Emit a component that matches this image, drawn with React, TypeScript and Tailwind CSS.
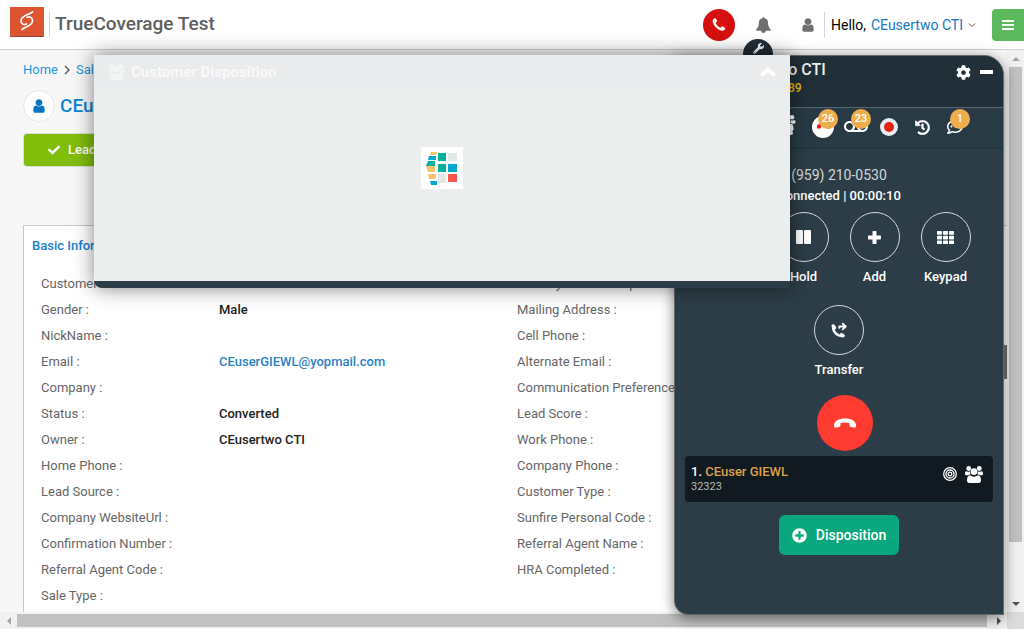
import React from 'react';
import { FaCheck, FaCog, FaHistory, FaPlusCircle, FaRegCommentDots, FaWrench } from 'react-icons/fa';
import { MdVoicemail } from 'react-icons/md';

const USER_PATH =
  'M1536 1399q0 109-62.500 187t-150.500 78h-854q-88 0-150.500-78t-62.500-187q0-85 8.500-160.500t31.500-152 58.500-131 94-89 134.500-34.500q131 128 313 128t313-128q76 0 134.500 34.500t94 89 58.500 131 31.500 152 8.500 160.500zm-256-887q0 159-112.500 271.500t-271.500 112.500-271.500-112.500-112.500-271.500 112.500-271.500 271.500-112.500 271.500 112.500 112.500 271.500z';
const PHONE_PATH =
  'M1600 1240q0 27-10 70.500t-21 68.500q-21 50-122 106-94 51-186 51-27 0-53-3.500t-57.500-12.500-47-14.500-55.500-20.500-49-18q-98-35-175-83-127-79-264-216t-216-264q-48-77-83-175-3-9-18-49t-20.500-55.500-14.500-47-12.500-57.500-3.500-53q0-92 51-186 56-101 106-122 25-11 68.500-21t70.500-10q14 0 21 3 18 6 53 76 11 19 30 54t35 63.500 31 53.500q3 4 17.500 25t21.500 35.500 7 28.500q0 20-28.500 50t-62 55-62 53-28.500 46q0 9 5 22.500t8.500 20.500 14 24 11.500 19q76 137 174 235t235 174q2 1 19 11.500t24 14 20.500 8.500 22.500 5q18 0 46-28.500t53-62 55-62 50-28.500q14 0 28.500 7t35.500 21.500 25 17.500q25 15 53.500 31t63.500 35 54 30q70 35 76 53 3 7 3 21z';
const BELL_PATH =
  'M1664 1408q0 52-38 90t-90 38h-448q0 106-75 181t-181 75-181-75-75-181h-448q-52 0-90-38t-38-90q50-42 91-88t85-119.500 74.500-158.500 50-206 19.500-260q0-152 117-282.500t307-158.500q-8-19-8-39 0-40 28-68t68-28 68 28 28 68q0 20-8 39 190 28 307 158.500t117 282.500q0 139 19.500 260t50 206 74.500 158.500 85 119.500 91 88z';

function Glyph({ d, className }: { d: string; className: string }) {
  return (
    <svg viewBox="0 0 1792 1792" className={className} fill="currentColor" aria-hidden="true">
      <path d={d} />
    </svg>
  );
}

function UsersIcon({ className }: { className: string }) {
  return (
    <svg viewBox="0 0 18 17" className={className} fill="currentColor" aria-hidden="true">
      <circle cx="3.700" cy="2.500" r="2.400" />
      <circle cx="14.300" cy="2.500" r="2.400" />
      <circle cx="9" cy="5.600" r="3.400" />
      <path d="M4.300 17C2.800 17 2 16 2 14.500c0-3 1-5.200 3-5.200 2.500 1.800 5.500 1.800 8 0 2 0 3 2.200 3 5.200 0 1.500-.8 2.500-2.300 2.500z" />
      <path d="M5 5.600Q3 6 1.400 5.200C.3 5.200 0 6.600 0 8q0 1.200 1.200 1.200h2Q4 8.500 5.600 8.200 5 7 5 5.600zM13 5.600q2 .4 3.600-.4C17.700 5.200 18 6.600 18 8q0 1.200-1.200 1.200h-2q-.8-.7-2.400-1Q13 7 13 5.600z" />
    </svg>
  );
}

function BrandLogo() {
  return (
    <svg viewBox="0 0 34 30" className="h-[30px] w-[34px]" aria-hidden="true">
      <rect width="34" height="30" fill="#dc5430" />
      <rect y="29" width="34" height="1" fill="#96453a" />
      <g fill="none" stroke="#fff" strokeLinecap="round" strokeWidth="1.700">
        <path d="M22.500 5C20.500 7.500 11.500 8 11 13.500c-.2 3.500 3 5 5.500 3.500" />
        <path d="M12 22.500c2-2.500 10-3 10.500-8.500.2-3.500-2.800-5-5.300-3.700" />
      </g>
    </svg>
  );
}

function Header() {
  return (
    <header className="flex h-[50px] shrink-0 items-center border-b border-[#d0d0d0] bg-white">
      <a href="#home" aria-label="TrueCoverage" className="-mt-1.5 ml-2.5">
        <BrandLogo />
      </a>
      <div className="ml-[5px] h-[26px] w-px bg-[#d5d5d5]" />
      <h1 className="ml-[5px] text-[19px] font-medium text-[#606060]">TrueCoverage Test</h1>
      <div className="ml-auto flex items-center">
        <button aria-label="Calls" className="flex size-8 items-center justify-center rounded-full bg-[#d60f0f] text-white">
          <Glyph d={PHONE_PATH} className="size-4" />
        </button>
        <button aria-label="Notifications" className="ml-[21px] text-[#6f6f6f]">
          <Glyph d={BELL_PATH} className="size-4" />
        </button>
        <button aria-label="Profile" className="ml-7 text-[#6f6f6f]">
          <Glyph d={USER_PATH} className="size-4" />
        </button>
        <div className="ml-2 h-[26px] w-px bg-[#cfd5dc]" />
        <span className="ml-1.5 flex gap-[5px] text-sm text-black">
          Hello, <a href="#account" className="text-[#1577bf]">CEusertwo CTI</a>
        </span>
        <svg viewBox="0 0 8 6" className="ml-[5px] h-1.5 w-2" fill="none" stroke="#7a4a44" aria-hidden="true">
          <path d="M1 1.500 4 4.500 7 1.500" />
        </svg>
        <button aria-label="Menu" className="ml-4 flex size-8 items-center justify-center rounded-l-sm bg-[#5cb85c]">
          <svg viewBox="0 0 12 10" className="h-2.5 w-3" fill="#fff" aria-hidden="true">
            <path d="M0 0h12v2H0zM0 4h12v2H0zM0 8h12v2H0z" />
          </svg>
        </button>
      </div>
    </header>
  );
}

const rows: [string, string, string][] = [
  ['Customer Id :', '', 'Primary Relationship :'],
  ['Gender :', 'Male', 'Mailing Address :'],
  ['NickName :', '', 'Cell Phone :'],
  ['Email :', 'CEuserGIEWL@yopmail.com', 'Alternate Email :'],
  ['Company :', '', 'Communication Preference :'],
  ['Status :', 'Converted', 'Lead Score :'],
  ['Owner :', 'CEusertwo CTI', 'Work Phone :'],
  ['Home Phone :', '', 'Company Phone :'],
  ['Lead Source :', '', 'Customer Type :'],
  ['Company WebsiteUrl :', '', 'Sunfire Personal Code :'],
  ['Confirmation Number :', '', 'Referral Agent Name :'],
  ['Referral Agent Code :', '', 'HRA Completed :'],
  ['Sale Type :', '', ''],
];

function LeadPage() {
  return (
    <main className="min-w-0 flex-1 overflow-hidden bg-[#f7f7f7] pl-[23px]">
      <nav className="flex h-10 items-center gap-1.5 text-[13px] text-[#1f97dd]">
        <a href="#home">Home</a>
        <svg viewBox="0 0 6 10" className="h-2.5 w-1.5" fill="none" stroke="#555" strokeWidth="1.4" aria-hidden="true">
          <path d="m1 1 4 4-4 4" />
        </svg>
        <a href="#sales">Sales</a>
      </nav>
      <div className="flex items-center gap-[5px]">
        <span className="flex size-8 items-center justify-center rounded-full border border-[#e6e6e6] bg-white text-[#0674c0]">
          <Glyph d={USER_PATH} className="size-4" />
        </span>
        <h2 className="text-[19px] leading-7 font-medium text-[#0d83d0]">CEuser GIEWL</h2>
      </div>
      <button className="mt-[11px] flex h-[34px] items-center gap-2 rounded border border-[#dcdcdc] bg-[#81bd0b] px-6 text-[13px] font-medium text-white">
        <FaCheck className="size-3" />
        Lead Converted
      </button>
      <section className="mt-[58px] border-y border-l border-[#c8c8c8] bg-white pb-10">
        <h3 className="pt-2.5 pl-2 text-[13px] leading-5 font-medium text-[#1980cb]">Basic Information</h3>
        <table className="mt-[15px] ml-[17px] w-[900px] table-fixed text-left text-[13px]">
          <tbody>
            {rows.map(([label, value, other]) => (
              <tr key={label} className="h-[26px] whitespace-nowrap">
                <th className="w-[178px] p-0 font-normal text-[#666]">{label}</th>
                <td className="w-[298px] p-0 font-medium text-[#222]">
                  {value.includes('@') ? <a href="#email" className="text-[#2b82c4]">{value}</a> : value}
                </td>
                <th className="p-0 font-normal text-[#666]">{other}</th>
              </tr>
            ))}
          </tbody>
        </table>
      </section>
    </main>
  );
}

function Arrow({ d, dark = false }: { d: string; dark?: boolean }) {
  return (
    <svg viewBox="0 0 8 8" className="size-2" fill={dark ? '#505050' : '#a3a3a3'} aria-hidden="true">
      <path d={d} />
    </svg>
  );
}

function VerticalBar() {
  return (
    <div className="flex w-[17px] shrink-0 flex-col items-center bg-[#f1f1f1]">
      <div className="flex h-[17px] items-center"><Arrow d="M0 6h8L4 2z" /></div>
      <div className="w-[13px] grow-[475] bg-[#c1c1c1]" />
      <div className="grow-[53]" />
      <div className="flex h-[17px] items-center"><Arrow dark d="M0 2h8L4 6z" /></div>
    </div>
  );
}

function HorizontalBar() {
  return (
    <div className="flex h-[17px] shrink-0 items-center bg-[#f1f1f1]">
      <div className="flex w-[17px] justify-center"><Arrow d="M6 0v8L2 4z" /></div>
      <div className="h-[13px] flex-1 bg-[#c1c1c1]" />
      <div className="flex w-5 justify-center pl-1"><Arrow dark d="M2 0v8l4-4z" /></div>
      <div className="size-[17px] bg-[#dcdcdc]" />
    </div>
  );
}

function Tool({ label, badge, children }: { label: string; badge?: string; children: React.ReactNode }) {
  return (
    <button aria-label={label} className="relative flex size-6 items-center justify-center">
      {children}
      {badge && (
        <span className="absolute -top-1.5 left-[7px] flex size-5 items-center justify-center rounded-full bg-[#f0ad4e] text-[11px] font-medium text-white">
          {badge}
        </span>
      )}
    </button>
  );
}

function CallAction({ label, children }: { label: string; children: React.ReactNode }) {
  return (
    <button className="flex w-[71px] flex-col items-center text-[13px] font-medium text-white">
      <span className="flex size-[50px] items-center justify-center rounded-full border border-[#d5d9da]">{children}</span>
      <span className="mt-[5px] leading-5">{label}</span>
    </button>
  );
}

function MicIcon() {
  return (
    <svg viewBox="0 0 16 16" className="size-4" fill="#fff" aria-hidden="true">
      <rect x="6" width="4" height="10" rx="2" />
      <path d="M3 7h1.500c0 5 7 5 7 0H13c0 3-2 4.700-4.200 5V15H7.200v-3C5 11.700 3 10 3 7z" />
    </svg>
  );
}

function KeypadIcon() {
  return (
    <svg viewBox="0 0 17 13" className="h-[13px] w-[17px]" fill="#fff" aria-hidden="true">
      {[0, 4.7, 9.4].map((y) =>
        [0, 6, 12].map((x) => <rect key={`${x}-${y}`} x={x} y={y} width="5" height="3.700" rx=".7" />),
      )}
    </svg>
  );
}

function PhonePanel() {
  return (
    <aside className="absolute top-[55px] right-5 bottom-3.5 w-[330px]">
      <div className="absolute -top-4 left-[69px] flex size-[30px] justify-center rounded-full bg-[#202f38] pt-1 text-white">
        <FaWrench className="size-[11px]" />
      </div>
      <div className="relative flex h-full flex-col overflow-hidden rounded-tr-[20px] rounded-bl-[14px] border border-[#66696b] bg-[#2c3d47] text-white shadow-[0_3px_14px_rgba(0,0,0,0.5)]">
        <div className="flex h-[52px] shrink-0 border-b border-[#5b676e] bg-[#202f38] pr-2.5 pl-[45px]">
          <div className="flex-1 pt-1">
            <div className="text-base leading-5 font-medium text-[#eee]">CEusertwo CTI</div>
            <div className="text-xs leading-4 font-medium text-[#e5bd0b]">+19592100389</div>
          </div>
          <div className="flex h-8 items-center gap-[9px]">
            <button aria-label="Settings"><FaCog className="size-[15px]" /></button>
            <button aria-label="Minimize" className="h-1 w-[13px] bg-white" />
          </div>
        </div>
        <div className="flex h-[41px] shrink-0 items-center justify-end gap-[9px] border-b border-[#22323b] bg-[#283b45] pr-9 pb-0.5">
          <Tool label="Agents">
            <svg viewBox="0 0 22 24" className="h-6 w-[22px] shrink-0" aria-hidden="true">
              <circle cx="12" cy="18" r="2" fill="#fff" />
            </svg>
            <UsersIcon className="absolute top-0 left-0 h-4 w-[18px]" />
          </Tool>
          <Tool label="Missed calls" badge="26">
            <svg viewBox="0 0 22 22" className="size-[22px] shrink-0" aria-hidden="true">
              <circle cx="11" cy="11" r="11" fill="#fff" />
              <path d="M5 12.500V9.500L7 8h8l3 2v2.500h-3.500L13.500 10H9.500l-1 2.500z" fill="#f31818" />
            </svg>
          </Tool>
          <Tool label="Voicemail" badge="23"><MdVoicemail className="size-6 shrink-0" /></Tool>
          <Tool label="Record">
            <svg viewBox="0 0 18 18" className="size-[18px]" aria-hidden="true">
              <circle cx="9" cy="9" r="9" fill="#e9edf3" />
              <circle cx="9" cy="9" r="5" fill="#e8230f" />
            </svg>
          </Tool>
          <Tool label="History"><FaHistory className="size-[15px]" stroke="currentColor" strokeWidth="14" /></Tool>
          <Tool label="Messages" badge="1"><FaRegCommentDots className="size-4" /></Tool>
        </div>
        <div className="pt-4 text-center">
          <div className="text-sm leading-5 text-[#d2d6d8]">(959) 210-0530</div>
          <div className="text-[13px] leading-[22px] font-medium">Connected | 00:00:10</div>
        </div>
        <div className="mt-[5px] flex flex-wrap justify-center gap-y-[18px] px-4">
          <CallAction label="Mute"><MicIcon /></CallAction>
          <CallAction label="Hold">
            <svg viewBox="0 0 15 14" className="h-3.5 w-[15px]" fill="#fff" aria-hidden="true">
              <rect width="7" height="14" rx="1" /><rect x="8" width="7" height="14" rx="1" />
            </svg>
          </CallAction>
          <CallAction label="Add">
            <svg viewBox="0 0 13 13" className="size-[13px]" fill="#fff" aria-hidden="true">
              <path d="M5.300 0h2.400q.8 0 .8.800v3.700h3.700q.8 0 .8.800v2.400q0 .8-.8.800H8.500v3.700q0 .8-.8.800H5.300q-.8 0-.8-.8V8.500H.8Q0 8.500 0 7.700V5.300q0-.8.8-.8h3.700V.8q0-.8.8-.8z" />
            </svg>
          </CallAction>
          <CallAction label="Keypad"><KeypadIcon /></CallAction>
          <CallAction label="Transfer">
            <svg viewBox="0 0 16 16" className="size-4" fill="none" stroke="#fff" strokeLinecap="round" aria-hidden="true">
              <path d="M2 4.500C2 10 6 14 11.500 14" strokeWidth="2.400" />
              <path d="m2.300 4 1.200 1.700M10.500 12.700l1.500.9" strokeWidth="3.400" />
              <path d="M8.300 5.800V4.500h6M11.800 1.800l2.900 2.700-2.900 2.700" strokeWidth="1.900" strokeLinejoin="round" />
            </svg>
          </CallAction>
        </div>
        <button aria-label="End call" className="mt-[15px] ml-[142px] flex size-14 shrink-0 items-center justify-center rounded-full bg-[#ff3a30]">
          <svg viewBox="0 0 22 10" className="h-2.5 w-[22px]" fill="#fff" aria-hidden="true">
            <path d="M0 7.500C0 3 5 .5 11 .5s11 2.500 11 7c0 2-.8 2.200-2 2l-3-.6c-1.200-.3-1.500-.8-1.500-2V5.200q-4.500-1.400-9 0v1.700c0 1.200-.3 1.700-1.500 2l-3 .6c-1.200.2-2 0-2-2z" />
          </svg>
        </button>
        <div className="mx-2.5 mt-[5px] flex h-[46px] shrink-0 rounded bg-[#111a20] pr-2.5 pl-1.5">
          <div className="flex-1 pt-1.5">
            <div className="text-[13px] leading-5 font-medium">
              1. <a href="#caller" className="text-[#dfa04a]">CEuser GIEWL</a>
            </div>
            <div className="text-[11px] leading-2.5 text-[#bbb]">32323</div>
          </div>
          <div className="flex h-9 items-center gap-2">
            <svg viewBox="0 0 14 14" className="size-3.5" fill="none" stroke="#fff" strokeWidth="1.300" aria-hidden="true">
              <circle cx="7" cy="7" r="6.300" /><circle cx="7" cy="7" r="4" /><circle cx="7" cy="7" r="1.800" />
            </svg>
            <UsersIcon className="h-[17px] w-[18px]" />
          </div>
        </div>
        <button className="mx-auto mt-[13px] flex h-10 w-[120px] shrink-0 items-center justify-center gap-[9px] rounded-md bg-[#0aa77e] text-sm font-medium">
          <FaPlusCircle className="size-[15px]" />
          Disposition
        </button>
      </div>
      <div className="absolute top-[290px] -right-[3px] h-[34px] w-[3px] bg-[#59595c]" />
    </aside>
  );
}

function Loader() {
  return (
    <svg viewBox="0 0 42 42" className="size-[42px]" aria-label="Loading" role="img">
      <rect width="42" height="42" fill="#fff" />
      <path d="M10 5h6l-1 3H9zM5 19h9v6H7zM7 27h8v5H8z" fill="#f6c26d" />
      <path d="M8 9h7v4H7zM9 34h7v4h-6z" fill="#00a8d0" />
      <path d="M7 14h7v5H5z" fill="#00b29b" />
      <path d="M17 6h8v8h-8zM17 17h8v8h-8z" fill="#00b29b" />
      <path d="M27 17h9v8h-9z" fill="#00a8d0" />
      <path d="M27 6h9v8h-9zM17 27h8v9h-8z" fill="#e1e7e6" />
      <path d="M27 27h9v8h-9z" fill="#fb5550" />
    </svg>
  );
}

function DispositionDialog() {
  return (
    <div role="dialog" aria-label="Customer Disposition" className="absolute top-[55px] right-[234px] left-[94px] flex h-[233px] flex-col rounded-bl-lg bg-[#2b3d47] shadow-[0_0_20px_rgba(0,0,0,0.5)]">
      <div className="flex h-[34px] shrink-0 items-center bg-[#e9ebec] pr-3.5 pl-3.5 text-[#f4f6f5]">
        <UsersIcon className="h-4 w-[17px]" />
        <h2 className="ml-1.5 text-[15px] font-bold text-[#f8f9f9]">Customer Disposition</h2>
        <button aria-label="Collapse" className="ml-auto">
          <svg viewBox="0 0 16 10" className="h-2.5 w-4" fill="none" stroke="#fff" strokeWidth="4" aria-hidden="true">
            <path d="m1.500 8.500 6.500-6 6.500 6" />
          </svg>
        </button>
      </div>
      <div className="flex flex-1 justify-center bg-[#ebeeed] pt-[58px]">
        <Loader />
      </div>
      <div className="h-[7px] shrink-0" />
    </div>
  );
}

export default function App() {
  return (
    <div className="relative flex h-screen flex-col overflow-hidden font-[Roboto,sans-serif]">
      <Header />
      <div className="flex min-h-0 flex-1">
        <LeadPage />
        <VerticalBar />
      </div>
      <HorizontalBar />
      <PhonePanel />
      <DispositionDialog />
    </div>
  );
}
